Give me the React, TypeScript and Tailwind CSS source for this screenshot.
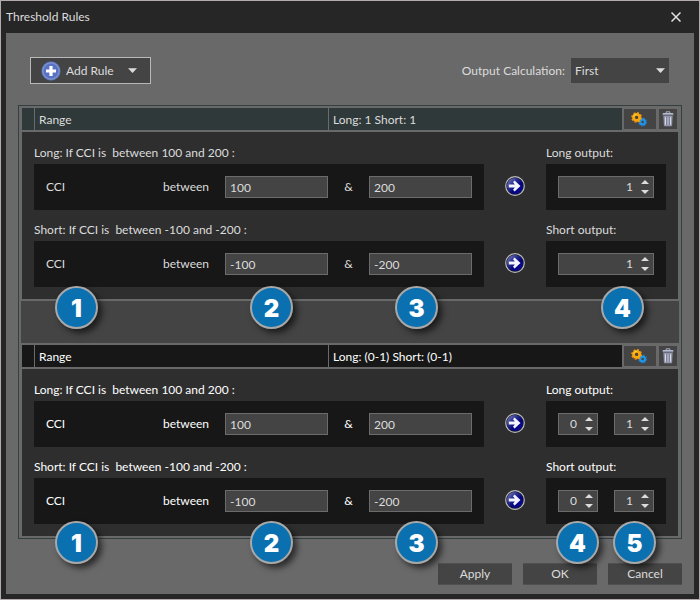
import React, { useId } from "react";
import clsx from "clsx";

function GearsIcon() {
  return (
    <svg width="18" height="16" viewBox="0 0 18 16" aria-hidden="true">
      <circle cx="11.6" cy="11" r="2.4" fill="none" stroke="#2196e8" strokeWidth="2.2" />
      <circle cx="11.6" cy="11" r="3.7" fill="none" stroke="#1b86d6" strokeWidth="1.4" strokeDasharray="1.5 1.4" />
      <circle cx="5.6" cy="6.4" r="3.1" fill="none" stroke="#f9a80c" strokeWidth="2.8" />
      <circle cx="5.6" cy="6.4" r="4.6" fill="none" stroke="#f79a0a" strokeWidth="1.6" strokeDasharray="1.9 1.7" />
      <path d="M2.6 5.6A3.3 3.3 0 0 1 6 3.2" fill="none" stroke="#ffd54a" strokeWidth="1" />
      <path d="M2 9.6A5 5 0 0 0 6 11.4" fill="none" stroke="#b5651a" strokeWidth="0.8" />
    </svg>
  );
}

function TrashIcon() {
  return (
    <svg width="12" height="16" viewBox="0 0 12 16" aria-hidden="true">
      <path d="M4.2 2V.8h3.6V2" fill="none" stroke="#a9aec2" strokeWidth="1" />
      <rect x="0.5" y="2" width="11" height="2.4" rx="1" fill="#8d93aa" />
      <rect x="1" y="2" width="10" height="1" rx="0.5" fill="#b6bbcd" />
      <path d="M1.4 5h9.2l-.5 9.2q-.1 1-1 1H2.9q-.9 0-1-1z" fill="#9297ad" />
      <path d="M3.6 6.2v7.6M6 6.2v7.6M8.4 6.2v7.6" stroke="#d9dcea" strokeWidth="1.1" />
      <path d="M4.8 6v8M7.2 6v8" stroke="#6c7082" strokeWidth="0.9" />
    </svg>
  );
}

function ArrowOrb() {
  const id = useId();
  return (
    <svg width="20" height="20" viewBox="0 0 20 20" aria-hidden="true">
      <defs>
        <linearGradient id={id} x1="0" y1="0" x2="1" y2="1">
          <stop offset="0" stopColor="#8a90c8" />
          <stop offset="0.35" stopColor="#2c3290" />
          <stop offset="0.6" stopColor="#04047c" />
          <stop offset="1" stopColor="#0c0ca0" />
        </linearGradient>
      </defs>
      <circle cx="10" cy="10" r="9.3" fill="#15152c" stroke="#bdbdbd" strokeWidth="1.2" />
      <circle cx="10" cy="10" r="8.1" fill={`url(#${id})`} />
      <path d="M3.8 8.6h6L8 6.2l1.6-1.7 5.9 5.5-5.9 5.5L8 13.8l1.8-2.4h-6z" fill="#f4f4ff" />
    </svg>
  );
}

function PlusOrb() {
  return (
    <svg width="20" height="20" viewBox="0 0 20 20" aria-hidden="true">
      <circle cx="10" cy="10" r="9.7" fill="#5369ad" />
      <circle cx="10" cy="10" r="8.2" fill="#5872c4" stroke="#7d92cc" strokeWidth="1.5" />
      <path d="M10 5v10M5 10h10" stroke="#fff" strokeWidth="3.2" />
    </svg>
  );
}

function Caret({ className }: { className?: string }) {
  return (
    <svg width="9" height="5" viewBox="0 0 9 5" className={className} aria-hidden="true">
      <path d="M0 .2h9L4.5 5z" fill="#dcdcdc" />
    </svg>
  );
}

function StepArrow({ up }: { up?: boolean }) {
  return (
    <svg width="8" height="4" viewBox="0 0 8 4" className="block" aria-hidden="true">
      <path d={up ? "M4 0l4 4H0z" : "M0 0h8L4 4z"} fill="#dcdcdc" />
    </svg>
  );
}

function Spinner({ label, value, wide }: { label: string; value: number; wide?: boolean }) {
  return (
    <div className={clsx("flex h-[22px] border border-[#6b6b6b] bg-[#444]", wide ? "w-full" : "w-10")}>
      <input
        type="number"
        aria-label={label}
        defaultValue={value}
        className="w-0 min-w-0 flex-1 bg-transparent text-right text-[#dcdcdc] outline-none [appearance:textfield] [&::-webkit-inner-spin-button]:appearance-none"
      />
      <div className="flex w-5 flex-col items-end justify-center gap-1.5 pr-1">
        <button type="button" aria-label={`Increase ${label}`}>
          <StepArrow up />
        </button>
        <button type="button" aria-label={`Decrease ${label}`}>
          <StepArrow />
        </button>
      </div>
    </div>
  );
}

function Bound({ label, value }: { label: string; value: string }) {
  return (
    <input
      type="text"
      aria-label={label}
      defaultValue={value}
      className="h-[22px] w-[103px] border border-[#6b6b6b] bg-[#444] px-1 text-[#dcdcdc] outline-none"
    />
  );
}

function Condition({ side, low, high, outputs }: { side: string; low: string; high: string; outputs: number[] }) {
  return (
    <div className="flex">
      <div className="flex-1">
        <p className="h-[31px] whitespace-pre pt-3 leading-4">
          {`${side}: If CCI is  between ${low} and ${high} :`}
        </p>
        <div className="flex h-[46px] items-center bg-[#171717] px-3">
          <span className="flex-1">CCI</span>
          <span className="pr-4">between</span>
          <Bound label={`${side} lower bound`} value={low} />
          <span className="w-[41px] text-center">&amp;</span>
          <Bound label={`${side} upper bound`} value={high} />
        </div>
      </div>
      <div className="flex w-[62px] justify-center pt-[43px]">
        <ArrowOrb />
      </div>
      <div className="w-[120px]">
        <p className="h-[31px] pt-3 leading-4">{side} output:</p>
        <div className="flex h-[46px] items-center justify-between bg-[#171717] px-3">
          {outputs.map((v, i) => (
            <Spinner key={i} label={`${side} output ${i + 1}`} value={v} wide={outputs.length === 1} />
          ))}
        </div>
      </div>
    </div>
  );
}

function Badge({ n, className }: { n: number; className: string }) {
  return (
    <span
      className={clsx(
        "absolute z-10 flex size-[43px] items-center justify-center rounded-full border-2 border-[#a8a8a8] bg-[#0a70b0] pt-0.5 font-['Inter','Roboto',sans-serif] text-2xl font-black text-white shadow-[4px_4px_6px_rgba(0,0,0,0.6)]",
        className,
      )}
    >
      {n}
    </span>
  );
}

type RuleProps = { summary: string; outputs: number[]; active?: boolean; children: React.ReactNode };

function Rule({ summary, outputs, active, children }: RuleProps) {
  return (
    <section className={clsx("relative mx-px", active ? "text-[#dcdcdc]" : "text-white")}>
      <header className="flex h-[22px] gap-0.5">
        <div className={clsx("flex flex-1 leading-6", active ? "bg-[#2f3939]" : "bg-[#171717]")}>
          <div className="w-3" />
          <div className="flex-1 border-l border-[#6b6b6b] px-1">Range</div>
          <div className="w-[294px] border-l border-[#6b6b6b] px-1">{summary}</div>
        </div>
        <div className="flex items-center gap-[3px] pr-px">
          <button type="button" aria-label="Rule settings" className="flex h-5 w-8 items-center justify-center bg-[#444]">
            <GearsIcon />
          </button>
          <button type="button" aria-label="Delete rule" className="flex h-5 w-[18px] items-center justify-center bg-[#444]">
            <TrashIcon />
          </button>
        </div>
      </header>
      <div className="mt-0.5 bg-[#2e2e2e] px-3 pb-3 pt-px">
        <Condition side="Long" low="100" high="200" outputs={outputs} />
        <Condition side="Short" low="-100" high="-200" outputs={outputs} />
      </div>
      {children}
    </section>
  );
}

export default function App() {
  return (
    <div className="flex min-h-screen flex-col border border-[#b4acac] bg-[#262626] px-[5px] pb-[5px] font-['Lato','Open_Sans',sans-serif] text-xs text-[#dcdcdc]">
      <header className="flex h-8 items-center justify-between pr-[13px]">
        <h1>Threshold Rules</h1>
        <button type="button" aria-label="Close">
          <svg width="10" height="10" viewBox="0 0 10 10" aria-hidden="true">
            <path d="M.5.5l9 9M9.5.5l-9 9" stroke="#e0e0e0" strokeWidth="1.5" />
          </svg>
        </button>
      </header>

      <main className="flex-1 bg-[#696969] px-3 pt-6">
        <div className="flex items-center justify-between pl-3 pr-[13px]">
          <button type="button" className="flex h-[27px] w-[121px] items-center border border-[#b8b8b8] bg-[#444] pl-2.5">
            <PlusOrb />
            <span className="ml-[5px] flex-1 text-left">Add Rule</span>
            <Caret className="mr-[13px]" />
          </button>
          <div className="flex items-center gap-1.5">
            <label htmlFor="calc">Output Calculation:</label>
            <div className="relative">
              <select id="calc" className="block h-[25px] w-[98px] appearance-none bg-[#444] px-1 outline-none">
                <option>First</option>
                <option>Last</option>
                <option>Sum</option>
              </select>
              <Caret className="pointer-events-none absolute right-1 top-2.5" />
            </div>
          </div>
        </div>

        <div className="mt-[21px] border border-[#344040] p-0.5">
          <Rule active summary="Long: 1 Short: 1" outputs={[1]}>
            <Badge n={1} className="-bottom-[30px] left-[33px]" />
            <Badge n={2} className="-bottom-[30px] left-[228px]" />
            <Badge n={3} className="-bottom-[30px] left-[373px]" />
            <Badge n={4} className="-bottom-[30px] right-[34px]" />
          </Rule>
          <div className="my-0.5 h-[42px] bg-[#444]" />
          <Rule summary="Long: (0-1) Short: (0-1)" outputs={[0, 1]}>
            <Badge n={1} className="-bottom-7 left-[33px]" />
            <Badge n={2} className="-bottom-7 left-[228px]" />
            <Badge n={3} className="-bottom-7 left-[373px]" />
            <Badge n={4} className="-bottom-7 right-[79px]" />
            <Badge n={5} className="-bottom-7 right-[22px]" />
          </Rule>
        </div>

        <footer className="mt-6 flex justify-end gap-[11px] pb-2">
          {["Apply", "OK", "Cancel"].map((name) => (
            <button key={name} type="button" className="h-[22px] w-[74px] border-y border-[#505050] bg-[#444]">
              {name}
            </button>
          ))}
        </footer>
      </main>
    </div>
  );
}
